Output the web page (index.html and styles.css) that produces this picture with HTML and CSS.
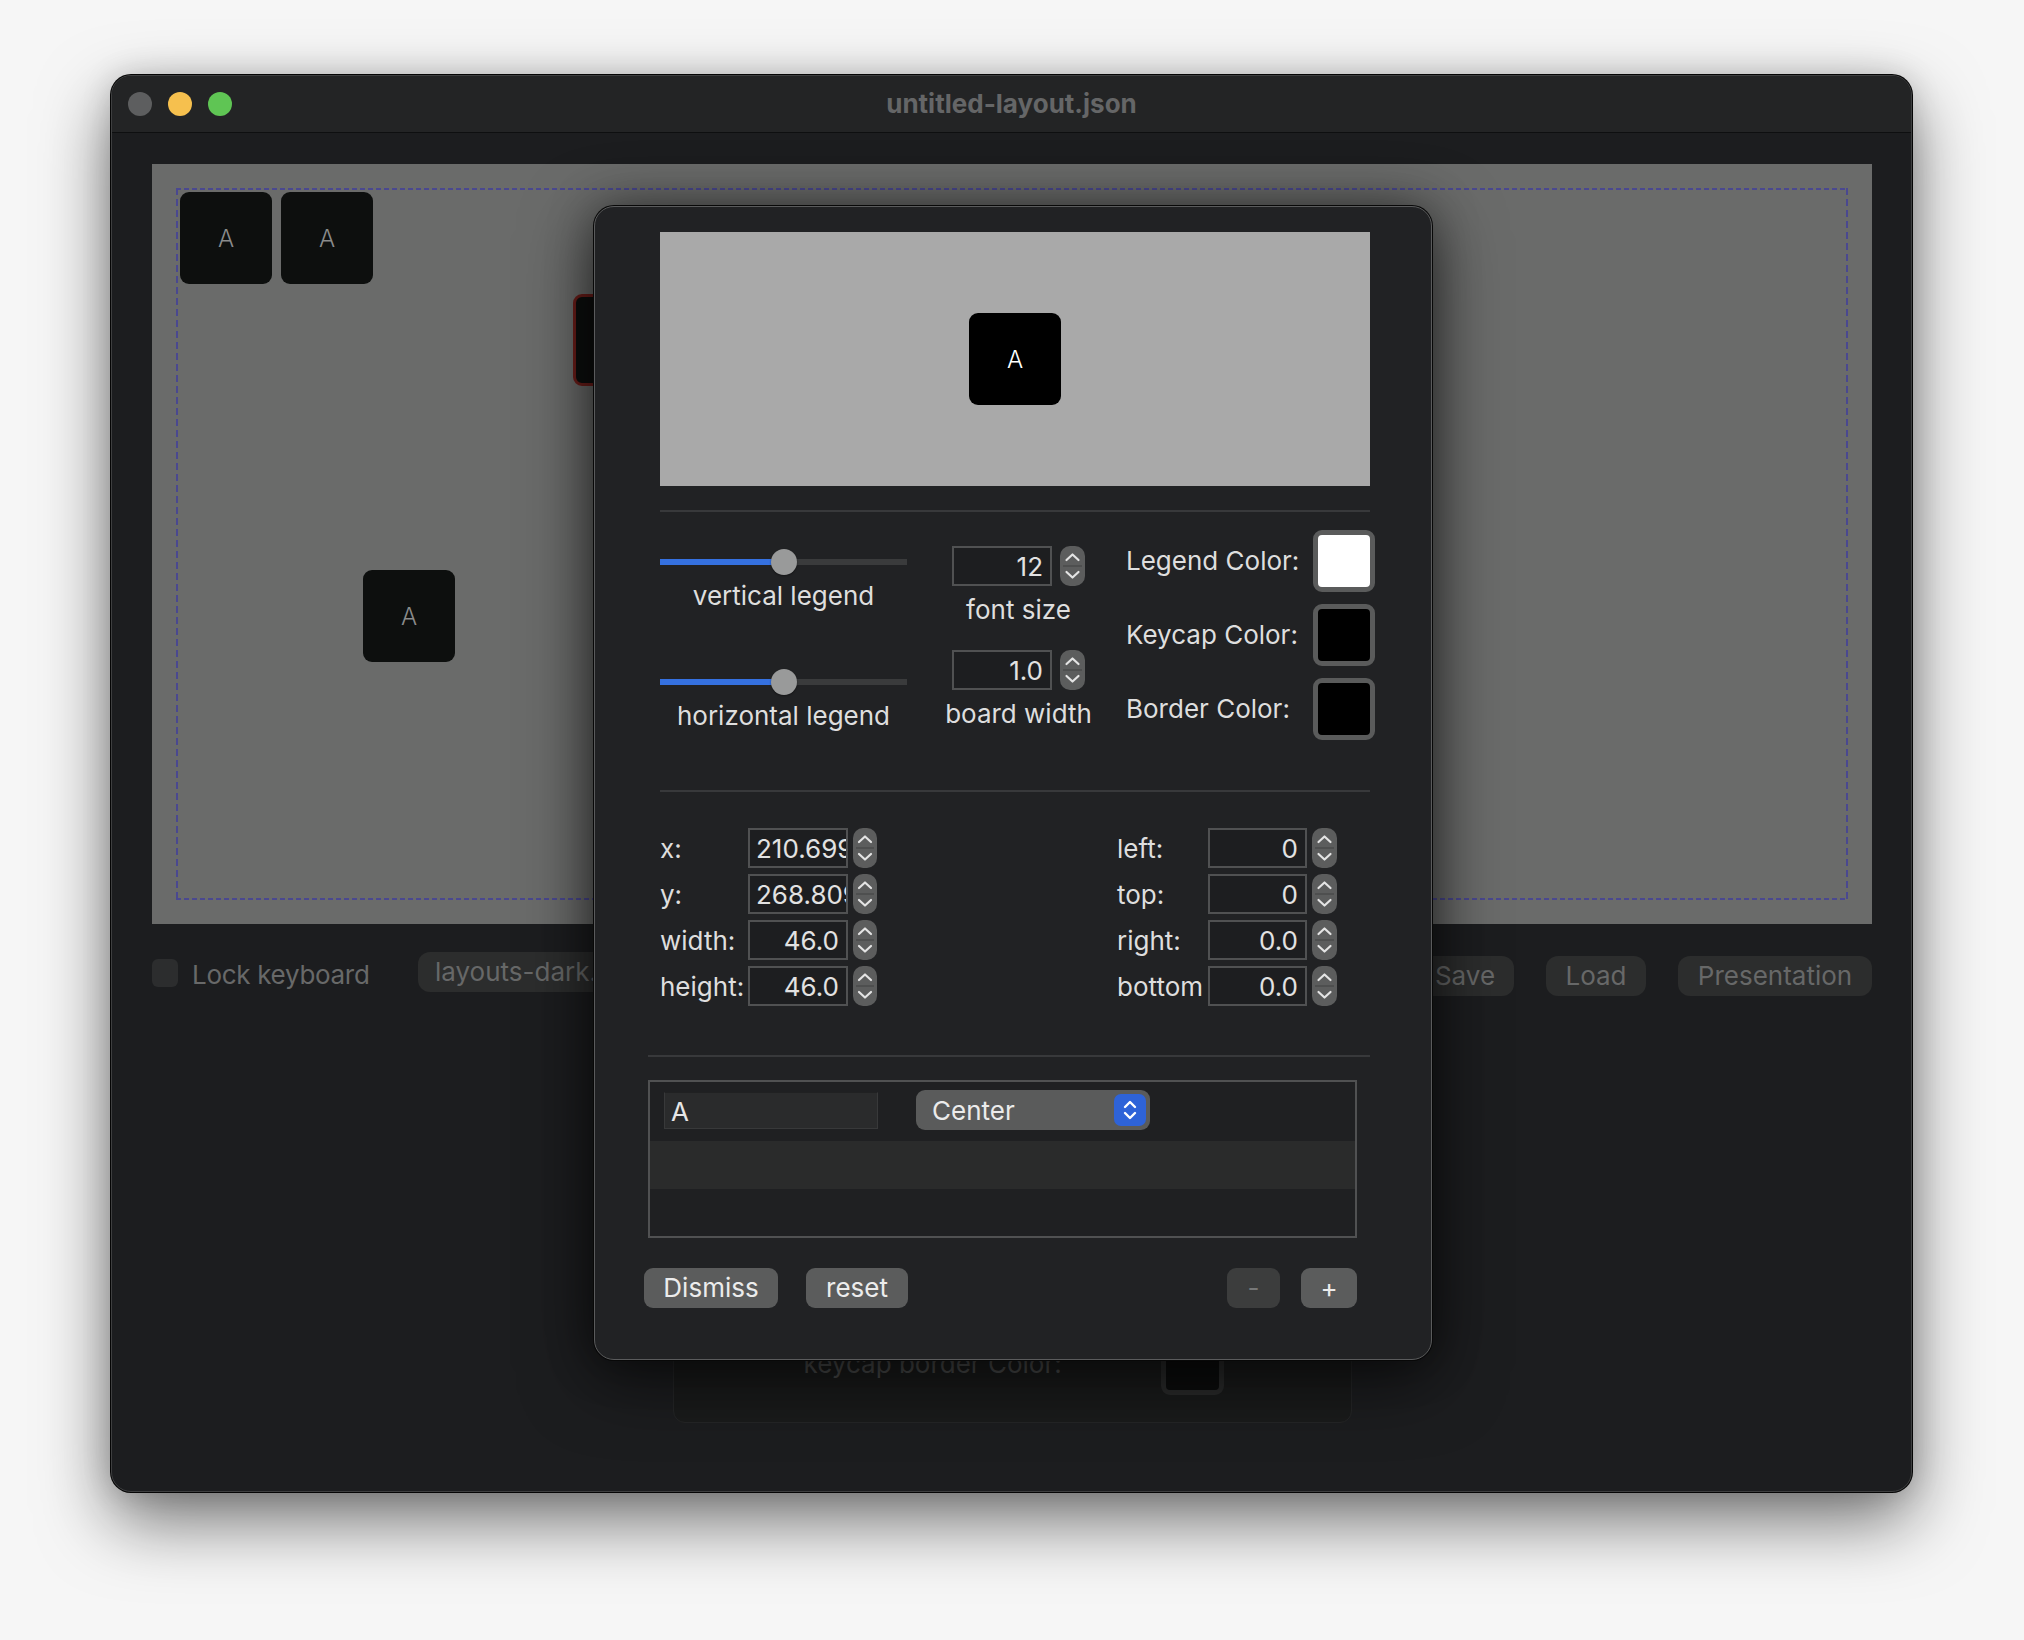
FILE: index.html
```html
<!DOCTYPE html>
<html>
<head>
<meta charset="utf-8">
<title>untitled-layout.json</title>
<link rel="stylesheet" href="styles.css">
</head>
<body>
<div class="window">
  <div class="titlebar">
    <div class="lights"><span class="light close"></span><span class="light min"></span><span class="light max"></span></div>
    <div class="title">untitled-layout.json</div>
    <div></div>
  </div>
  <div class="content">
    <div class="canvas">
      <div class="board">
        <div class="key k1">A</div>
        <div class="key k2">A</div>
        <div class="key k3">A</div>
        <div class="key k4 selected">A</div>
      </div>
    </div>
    <div class="bottombar">
      <div class="lockgroup"><span class="checkbox"></span><span class="dimtext">Lock keyboard</span></div>
      <div class="pill">layouts-dark.json</div>
      <div class="rightgroup">
        <div class="dbtn save">Save</div>
        <div class="dbtn load">Load</div>
        <div class="dbtn pres">Presentation</div>
      </div>
    </div>
    <div class="backpanel">
      <div class="backrow"><span class="backlabel">keycap border Color:</span><span class="backswatch"></span></div>
    </div>
  </div>

  <div class="dialog">
    <div class="preview"><div class="pkey">A</div></div>
    <div class="sep first"></div>
    <div class="section2">
      <div class="colA">
        <div class="slider s1"><span class="knob"></span></div>
        <div class="clabel l1">vertical legend</div>
        <div class="slider s2"><span class="knob"></span></div>
        <div class="clabel l2">horizontal legend</div>
      </div>
      <div class="colB">
        <div class="numrow n1">
          <div class="field fs">12</div>
          <div class="stepper"><svg width="25" height="40" viewBox="0 0 25 40"><path d="M6.5 14 L12.5 8.5 L18.5 14" /><line x1="3" y1="20" x2="22" y2="20" class="div"/><path d="M6.5 26 L12.5 31.5 L18.5 26" /></svg></div>
        </div>
        <div class="clabel b1">font size</div>
        <div class="numrow n2">
          <div class="field fs">1.0</div>
          <div class="stepper"><svg width="25" height="40" viewBox="0 0 25 40"><path d="M6.5 14 L12.5 8.5 L18.5 14" /><line x1="3" y1="20" x2="22" y2="20" class="div"/><path d="M6.5 26 L12.5 31.5 L18.5 26" /></svg></div>
        </div>
        <div class="clabel b2">board width</div>
      </div>
      <div class="colC">
        <div class="crow"><span class="clabel">Legend Color:</span><span class="swatch white"></span></div>
        <div class="crow"><span class="clabel">Keycap Color:</span><span class="swatch black"></span></div>
        <div class="crow"><span class="clabel">Border Color:</span><span class="swatch black"></span></div>
      </div>
    </div>
    <div class="sep"></div>
    <div class="section3">
      <div class="fgrid left">
        <span class="flabel">x:</span><div class="field clip">210.699</div><div class="stepper"><svg width="24" height="40" viewBox="0 0 24 40"><path d="M6 14 L12 8.5 L18 14" /><line x1="3" y1="20" x2="21" y2="20" class="div"/><path d="M6 26 L12 31.5 L18 26" /></svg></div>
        <span class="flabel">y:</span><div class="field clip">268.809</div><div class="stepper"><svg width="24" height="40" viewBox="0 0 24 40"><path d="M6 14 L12 8.5 L18 14" /><line x1="3" y1="20" x2="21" y2="20" class="div"/><path d="M6 26 L12 31.5 L18 26" /></svg></div>
        <span class="flabel">width:</span><div class="field">46.0</div><div class="stepper"><svg width="24" height="40" viewBox="0 0 24 40"><path d="M6 14 L12 8.5 L18 14" /><line x1="3" y1="20" x2="21" y2="20" class="div"/><path d="M6 26 L12 31.5 L18 26" /></svg></div>
        <span class="flabel">height:</span><div class="field">46.0</div><div class="stepper"><svg width="24" height="40" viewBox="0 0 24 40"><path d="M6 14 L12 8.5 L18 14" /><line x1="3" y1="20" x2="21" y2="20" class="div"/><path d="M6 26 L12 31.5 L18 26" /></svg></div>
      </div>
      <div class="fgrid right">
        <span class="flabel">left:</span><div class="field">0</div><div class="stepper"><svg width="25" height="40" viewBox="0 0 25 40"><path d="M6.5 14 L12.5 8.5 L18.5 14" /><line x1="3" y1="20" x2="22" y2="20" class="div"/><path d="M6.5 26 L12.5 31.5 L18.5 26" /></svg></div>
        <span class="flabel">top:</span><div class="field">0</div><div class="stepper"><svg width="25" height="40" viewBox="0 0 25 40"><path d="M6.5 14 L12.5 8.5 L18.5 14" /><line x1="3" y1="20" x2="22" y2="20" class="div"/><path d="M6.5 26 L12.5 31.5 L18.5 26" /></svg></div>
        <span class="flabel">right:</span><div class="field">0.0</div><div class="stepper"><svg width="25" height="40" viewBox="0 0 25 40"><path d="M6.5 14 L12.5 8.5 L18.5 14" /><line x1="3" y1="20" x2="22" y2="20" class="div"/><path d="M6.5 26 L12.5 31.5 L18.5 26" /></svg></div>
        <span class="flabel">bottom</span><div class="field">0.0</div><div class="stepper"><svg width="25" height="40" viewBox="0 0 25 40"><path d="M6.5 14 L12.5 8.5 L18.5 14" /><line x1="3" y1="20" x2="22" y2="20" class="div"/><path d="M6.5 26 L12.5 31.5 L18.5 26" /></svg></div>
      </div>
    </div>
    <div class="sep wide"></div>
    <div class="table">
      <div class="trow first">
        <div class="tfield">A</div>
        <div class="popup"><span>Center</span><span class="popbtn"><svg width="32" height="32" viewBox="0 0 32 32"><path d="M11 13 L16 8 L21 13" /><path d="M11 19 L16 24 L21 19" /></svg></span></div>
      </div>
      <div class="trow band"></div>
    </div>
    <div class="btnrow">
      <div class="btn dismiss">Dismiss</div>
      <div class="btn reset">reset</div>
      <div class="btn minus">-</div>
      <div class="btn plus">+</div>
    </div>
  </div>
</div>
</body>
</html>
```
FILE: styles.css
```css
html, body {
  margin: 0;
  padding: 0;
}
body {
  background: #f6f6f6;
  font-family: Inter, "Noto Sans", "Liberation Sans", sans-serif;
  padding: 75px 0 0 111px;
  height: 1640px;
  box-sizing: border-box;
  overflow: hidden;
}
.window {
  position: relative;
  width: 1801px;
  height: 1417px;
  box-sizing: border-box;
  border: 1px solid #3e3f40;
  border-radius: 20px;
  background: #1c1d1f;
  box-shadow: 0 0 0 1px #050505, 0 28px 70px rgba(0, 0, 0, 0.55), 0 0 30px rgba(0, 0, 0, 0.15);
  overflow: hidden;
}
.titlebar {
  height: 56px;
  background: #232425;
  border-bottom: 1px solid #0e0f10;
  display: grid;
  grid-template-columns: 1fr auto 1fr;
  align-items: center;
}
.lights {
  display: flex;
  gap: 16px;
  padding-left: 16px;
}
.light {
  width: 24px;
  height: 24px;
  border-radius: 50%;
  display: block;
}
.light.close { background: #5d5e5f; }
.light.min { background: #f6c04e; }
.light.max { background: #5fc554; }
.title {
  font-size: 26px;
  font-weight: 700;
  color: #656667;
  margin-top: -2px;
}
.content {
  padding: 31px 39px 0 40px;
}
.canvas {
  width: 1720px;
  height: 760px;
  box-sizing: border-box;
  background: #6a6b6a;
  padding: 24px;
}
.board {
  position: relative;
  height: 100%;
  background:
    repeating-linear-gradient(90deg, #4a4890 0 5px, transparent 5px 8px) top left / 100% 2px no-repeat,
    repeating-linear-gradient(90deg, #4a4890 0 5px, transparent 5px 8px) bottom left / 100% 2px no-repeat,
    repeating-linear-gradient(180deg, #4a4890 0 7px, transparent 7px 11px) top left / 2px 100% no-repeat,
    repeating-linear-gradient(180deg, #4a4890 0 7px, transparent 7px 11px) top right / 2px 100% no-repeat;
}
.key {
  position: absolute;
  width: 92px;
  height: 92px;
  box-sizing: border-box;
  background: #0d0f0e;
  border-radius: 9px;
  color: #8a8b8b;
  font-size: 24px;
  font-weight: 300;
  display: flex;
  align-items: center;
  justify-content: center;
}
.k1 { left: 4px; top: 4px; }
.k2 { left: 105px; top: 4px; }
.k3 { left: 187px; top: 382px; }
.k4 { left: 397px; top: 106px; }
.key.selected { border: 3px solid #6b1d19; }

.bottombar {
  display: flex;
  align-items: center;
  height: 44px;
  margin-top: 28px;
}
.lockgroup {
  width: 266px;
  flex-shrink: 0;
  display: flex;
  align-items: center;
}
.checkbox {
  width: 26px;
  height: 28px;
  border-radius: 6px;
  background: #2c2d2e;
  display: block;
  margin-right: 14px;
  margin-top: -3px;
}
.dimtext {
  font-size: 26px;
  color: #686969;
  letter-spacing: -0.3px;
}
.pill {
  width: 300px;
  flex-shrink: 0;
  height: 40px;
  border-radius: 12px;
  background: #2c2d2d;
  color: #676868;
  font-size: 26px;
  line-height: 40px;
  padding-left: 17px;
  box-sizing: border-box;
  white-space: nowrap;
  overflow: hidden;
  margin-top: -4px;
}
.rightgroup {
  margin-left: auto;
  display: flex;
  gap: 32px;
  margin-top: 4px;
}
.dbtn {
  height: 40px;
  border-radius: 12px;
  background: #2c2d2d;
  color: #676868;
  font-size: 26px;
  line-height: 40px;
  text-align: center;
}
.dbtn.save { width: 98px; }
.dbtn.load { width: 100px; }
.dbtn.pres { width: 194px; }

.backpanel {
  width: 679px;
  height: 397px;
  margin: 30px auto 0;
  box-sizing: border-box;
  border: 1px solid #252627;
  border-radius: 12px;
  background: #1a1b1b;
  display: flex;
  flex-direction: column;
  justify-content: flex-end;
  padding-bottom: 27px;
}
.backrow {
  display: flex;
  align-items: flex-end;
}
.backlabel {
  margin-left: 130px;
  font-size: 26px;
  color: #4a4b4b;
  margin-bottom: 16px;
}
.backswatch {
  margin-left: auto;
  margin-right: 127px;
  width: 63px;
  height: 62px;
  box-sizing: border-box;
  border: 5px solid #2a2b2b;
  border-radius: 9px;
  background: #0c0d0d;
}

/* dialog */
.dialog {
  position: absolute;
  left: 482px;
  top: 130px;
  width: 838px;
  height: 1154px;
  box-sizing: border-box;
  border: 1px solid #5a5b5c;
  border-radius: 20px;
  background: #212224;
  box-shadow: 0 0 0 1px #080808, 0 18px 70px rgba(0, 0, 0, 0.6), 0 0 45px rgba(0, 0, 0, 0.35);
  padding: 25px 61px 0 53px;
  color: #dfdfdf;
  font-size: 26px;
}
.preview {
  margin-left: 12px;
  height: 254px;
  background: #a9a9a9;
  display: flex;
  align-items: center;
  justify-content: center;
}
.pkey {
  width: 92px;
  height: 92px;
  border-radius: 9px;
  background: #000;
  color: #fff;
  font-size: 24px;
  font-weight: 300;
  display: flex;
  align-items: center;
  justify-content: center;
}
.sep {
  height: 2px;
  background: #38393b;
  margin-left: 12px;
}
.sep.first {
  margin-top: 24px;
}
.sep.wide {
  margin-left: 0;
  margin-top: 49px;
}
.section2 {
  height: 278px;
  margin-left: 12px;
  display: flex;
}
.clabel {
  font-size: 26px;
  line-height: 30px;
  color: #dedede;
  white-space: nowrap;
}
.colA {
  width: 247px;
  flex-shrink: 0;
  display: flex;
  flex-direction: column;
  align-items: center;
}
.slider {
  align-self: stretch;
  height: 26px;
  border-radius: 3px;
  background:
    linear-gradient(to right, #3571e0 0 124px, #3a3b3c 124px 100%) center / 100% 6px no-repeat;
  display: flex;
}
.knob {
  display: block;
  width: 26px;
  height: 26px;
  border-radius: 50%;
  background: #999a9a;
  margin-left: 111px;
  box-shadow: 0 1px 2px rgba(0, 0, 0, 0.4);
}
.s1 { margin-top: 37px; }
.l1 { margin-top: 6px; }
.s2 { margin-top: 58px; }
.l2 { margin-top: 6px; }

.colB {
  margin-left: 45px;
  width: 133px;
  flex-shrink: 0;
  display: flex;
  flex-direction: column;
  align-items: center;
}
.numrow {
  display: flex;
  gap: 8px;
  align-self: stretch;
}
.n1 { margin-top: 34px; }
.b1 { margin-top: 9px; }
.n2 { margin-top: 25px; }
.b2 { margin-top: 9px; }

.field {
  width: 100px;
  flex-shrink: 0;
  height: 40px;
  box-sizing: border-box;
  border: 2px solid #505152;
  background: #1d1e20;
  color: #e2e2e2;
  font-size: 26px;
  line-height: 38px;
  text-align: right;
  padding: 0 7px;
  white-space: nowrap;
  overflow: hidden;
}
.field.clip {
  text-align: left;
  padding: 0 0 0 6px;
  text-overflow: clip;
}
.stepper {
  height: 40px;
  border-radius: 10px;
  background: #5c5d5d;
  display: flex;
  flex-shrink: 0;
}
.stepper svg path {
  fill: none;
  stroke: #e4e4e4;
  stroke-width: 2.2;
  stroke-linecap: round;
  stroke-linejoin: round;
}
.stepper svg .div {
  stroke: #4a4b4b;
  stroke-width: 1.5;
}

.colC {
  margin-left: 41px;
  width: 249px;
  flex-shrink: 0;
  display: flex;
  flex-direction: column;
  gap: 12px;
  padding-top: 18px;
}
.crow {
  display: flex;
  align-items: center;
  justify-content: space-between;
  height: 62px;
}
.swatch {
  width: 62px;
  height: 62px;
  box-sizing: border-box;
  border: 5px solid #5a5b5b;
  border-radius: 9px;
  display: block;
}
.swatch.white { background: #ffffff; }
.swatch.black { background: #000000; }

.section3 {
  margin-top: 36px;
  margin-left: 12px;
  display: flex;
}
.fgrid {
  display: grid;
  row-gap: 6px;
  align-items: center;
  flex-shrink: 0;
}
.fgrid.left {
  grid-template-columns: 88px 100px 29px;
}
.fgrid.right {
  margin-left: 240px;
  grid-template-columns: 91px 99px 30px;
}
.fgrid .field { width: auto; }
.fgrid .stepper { justify-self: end; }
.flabel {
  font-size: 26px;
  color: #dedede;
  white-space: nowrap;
  padding-top: 1px;
}

.table {
  margin-top: 23px;
  width: 709px;
  height: 158px;
  box-sizing: border-box;
  border: 2px solid #505152;
  background: #1f2022;
}
.trow.first {
  height: 59px;
  display: flex;
  align-items: flex-start;
  padding-left: 14px;
  box-sizing: border-box;
}
.tfield {
  margin-top: 10px;
  width: 214px;
  height: 37px;
  box-sizing: border-box;
  background: #2a2b2c;
  border: 1px solid #38393a;
  border-top-color: #202122;
  color: #e6e6e6;
  font-size: 26px;
  line-height: 38px;
  padding-left: 6px;
}
.popup {
  margin-top: 8px;
  margin-left: 38px;
  width: 234px;
  height: 40px;
  border-radius: 9px;
  background: #5a5b5b;
  box-sizing: border-box;
  display: flex;
  align-items: center;
  padding-left: 16px;
  padding-right: 4px;
  color: #ebebeb;
  font-size: 26px;
  justify-content: space-between;
}
.popbtn {
  width: 32px;
  height: 32px;
  border-radius: 7px;
  background: #2e63d8;
  display: flex;
}
.popbtn svg path {
  fill: none;
  stroke: #ffffff;
  stroke-width: 2.4;
  stroke-linecap: round;
  stroke-linejoin: round;
}
.trow.band {
  height: 48px;
  background: #2a2b2b;
}

.btnrow {
  margin-top: 30px;
  margin-left: -4px;
  width: 713px;
  display: flex;
}
.btn {
  height: 40px;
  border-radius: 9px;
  background: #5b5c5c;
  color: #ececec;
  font-size: 26px;
  line-height: 40px;
  text-align: center;
}
.btn.dismiss { width: 134px; }
.btn.reset { width: 102px; margin-left: 28px; }
.btn.minus {
  width: 53px;
  margin-left: auto;
  background: #3c3d3d;
  color: #777878;
}
.btn.plus { width: 56px; margin-left: 21px; }
```
